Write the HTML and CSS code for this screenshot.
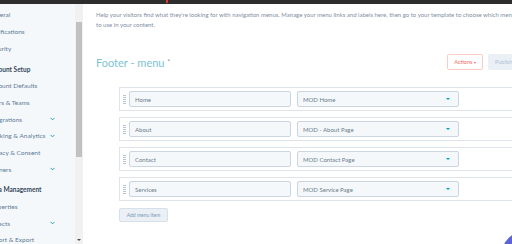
FILE: index.html
```html
<!DOCTYPE html>
<html lang="en">

<head>
    <meta charset="UTF-8">
    <meta name="viewport" content="width=device-width, initial-scale=1.0">
    <title>Navigation menus</title>
    <link rel="stylesheet" href="styles.css">
</head>

<body>
<div class="topbar"><span class="topbar-mark"></span></div>
<div class="layout">
    <aside class="sidebar">
        <ul class="nav">
            <li class="nav-item">General</li>
            <li class="nav-item">Notifications</li>
            <li class="nav-item">Security</li>
            <li class="nav-item nav-head">Account Setup</li>
            <li class="nav-item">Account Defaults</li>
            <li class="nav-item">Users &amp; Teams</li>
            <li class="nav-item">Integrations <svg class="chev" viewBox="0 0 6 4"><path d="M0.6 0.6 L3 3 L5.4 0.6" /></svg></li>
            <li class="nav-item">Tracking &amp; Analytics <svg class="chev" viewBox="0 0 6 4"><path d="M0.6 0.6 L3 3 L5.4 0.6" /></svg></li>
            <li class="nav-item">Privacy &amp; Consent</li>
            <li class="nav-item">Banners <svg class="chev" viewBox="0 0 6 4"><path d="M0.6 0.6 L3 3 L5.4 0.6" /></svg></li>
            <li class="nav-item nav-head">Data Management</li>
            <li class="nav-item">Properties</li>
            <li class="nav-item">Objects <svg class="chev" viewBox="0 0 6 4"><path d="M0.6 0.6 L3 3 L5.4 0.6" /></svg></li>
            <li class="nav-item">Import &amp; Export</li>
        </ul>
    </aside>
    <div class="scrollbar">
        <div class="scrollbar-thumb"></div>
        <span class="scrollbar-arrow"></span>
    </div>
    <main class="main">
        <div class="content">
            <h1 class="page-title">Navigation menus</h1>
            <p class="intro">Help your visitors find what they're looking for with navigation menus. Manage your menu links and labels here, then go to your template to choose which menu<br>to use in your content.</p>

            <div class="menu-header">
                <h2 class="menu-title">Footer - menu <span class="req">*</span></h2>
                <div class="menu-actions">
                    <button class="btn btn-actions">Actions <span class="caret">&#9662;</span></button>
                    <button class="btn btn-publish">Publish</button>
                </div>
            </div>

            <div class="menu-items">
                <div class="menu-row">
                    <svg class="grip" viewBox="0 0 3 9"><rect x="0" y="0" width="3" height="1" /><rect x="0" y="2" width="3" height="1" /><rect x="0" y="4" width="3" height="1" /><rect x="0" y="6" width="3" height="1" /><rect x="0" y="8" width="3" height="1" /></svg>
                    <div class="field">Home</div>
                    <div class="field select">MOD Home <span class="arrow"></span></div>
                </div>
                <div class="menu-row">
                    <svg class="grip" viewBox="0 0 3 9"><rect x="0" y="0" width="3" height="1" /><rect x="0" y="2" width="3" height="1" /><rect x="0" y="4" width="3" height="1" /><rect x="0" y="6" width="3" height="1" /><rect x="0" y="8" width="3" height="1" /></svg>
                    <div class="field">About</div>
                    <div class="field select">MOD - About Page <span class="arrow"></span></div>
                </div>
                <div class="menu-row">
                    <svg class="grip" viewBox="0 0 3 9"><rect x="0" y="0" width="3" height="1" /><rect x="0" y="2" width="3" height="1" /><rect x="0" y="4" width="3" height="1" /><rect x="0" y="6" width="3" height="1" /><rect x="0" y="8" width="3" height="1" /></svg>
                    <div class="field">Contact</div>
                    <div class="field select">MOD Contact Page <span class="arrow"></span></div>
                </div>
                <div class="menu-row">
                    <svg class="grip" viewBox="0 0 3 9"><rect x="0" y="0" width="3" height="1" /><rect x="0" y="2" width="3" height="1" /><rect x="0" y="4" width="3" height="1" /><rect x="0" y="6" width="3" height="1" /><rect x="0" y="8" width="3" height="1" /></svg>
                    <div class="field">Services</div>
                    <div class="field select">MOD Service Page <span class="arrow"></span></div>
                </div>
            </div>

            <button class="btn btn-add">Add menu item</button>
        </div>
    </main>
</div>
<div class="chat-launcher"></div>
</body>

</html>
```

FILE: styles.css
```css
body,
html {
    width: 100%;
    height: 100%;
    padding: 0;
    margin: 0;
    overflow: hidden;
}

body {
    font-family: Lato, "Open Sans", sans-serif;
    background-color: #ffffff;
    color: #33475b;
}

.topbar {
    height: 4px;
    background-color: #2d2d2d;
    display: flex;
}

.topbar-mark {
    width: 2px;
    height: 3px;
    margin-left: 166px;
    background-color: #e0362c;
}

.layout {
    display: flex;
    height: 240px;
}

/* left settings nav */

.sidebar {
    width: 75px;
    flex-shrink: 0;
    background-color: #f5f8fa;
    overflow: hidden;
}

.nav {
    list-style: none;
    margin: 0 0 0 -12px;
    padding: 2.65px 20px 0 0;
}

.nav-item {
    height: 16.7px;
    display: flex;
    align-items: center;
    justify-content: space-between;
    font-size: 6.5px;
    color: #5f7b98;
    white-space: nowrap;
}

.nav-head {
    margin-top: 4px;
    font-weight: bold;
    color: #33475b;
}

.chev {
    width: 5px;
    height: 4px;
    fill: none;
    stroke: #0091ae;
    stroke-width: 1;
}

.scrollbar {
    width: 8px;
    flex-shrink: 0;
    background-color: #f1f1f1;
    display: flex;
    flex-direction: column;
    align-items: center;
}

.scrollbar-thumb {
    width: 6px;
    height: 135px;
    margin-top: 18px;
    background-color: #c1c1c1;
}

.scrollbar-arrow {
    margin-top: auto;
    margin-bottom: 3px;
    border-left: 2px solid transparent;
    border-right: 2px solid transparent;
    border-top: 2px solid #505050;
}

/* main panel */

.main {
    flex: 1;
    overflow: hidden;
}

.content {
    width: 432px;
    padding-left: 13px;
}

.page-title {
    margin: -13px 0 0;
    font-size: 12px;
    line-height: 14px;
    font-weight: normal;
    color: #33475b;
}

.intro {
    margin: 5px 0 0;
    font-size: 6px;
    line-height: 10px;
    color: #7f8f9f;
    white-space: nowrap;
}

.menu-header {
    margin-top: 24px;
    height: 16px;
    display: flex;
    align-items: center;
    justify-content: space-between;
}

.menu-title {
    margin: 0;
    font-size: 11px;
    font-weight: normal;
    color: #7cc3d6;
}

.req {
    font-size: 7px;
    color: #8a9bab;
    vertical-align: 2px;
}

.menu-actions {
    display: flex;
    gap: 5px;
}

.btn {
    font-family: Lato, "Open Sans", sans-serif;
    border-radius: 2px;
    cursor: pointer;
    padding: 0;
}

.btn-actions {
    width: 36px;
    height: 16px;
    font-size: 5.5px;
    color: #f36b63;
    background-color: #ffffff;
    border: 1px solid #fbcdc8;
}

.caret {
    font-size: 4px;
}

.btn-publish {
    width: 40px;
    height: 16px;
    font-size: 5.5px;
    color: #b0c1d4;
    background-color: #eaf0f6;
    border: 1px solid #eaf0f6;
    text-align: left;
    padding-left: 6px;
}

.menu-items {
    margin: 17px 0 0 23px;
    display: flex;
    flex-direction: column;
    gap: 6px;
}

.menu-row {
    width: 430px;
    height: 24px;
    box-sizing: border-box;
    border: 1px solid #dfe3eb;
    background-color: #ffffff;
    display: flex;
    align-items: center;
    padding-left: 3px;
}

.grip {
    width: 3px;
    height: 9px;
    margin-right: 3px;
    fill: #b5c3d2;
}

.field {
    width: 162px;
    height: 16px;
    flex-shrink: 0;
    box-sizing: border-box;
    border: 1px solid #cbd6e2;
    border-radius: 2px;
    background-color: #f5f8fa;
    font-size: 6px;
    color: #6a7b8c;
    display: flex;
    align-items: center;
    padding-left: 5px;
}

.select {
    margin-left: 6px;
    justify-content: space-between;
    padding-right: 8px;
}

.arrow {
    border-left: 2px solid transparent;
    border-right: 2px solid transparent;
    border-top: 2px solid #00a4bd;
}

.btn-add {
    margin: 6px 0 0 23px;
    width: 49px;
    height: 14px;
    font-size: 5px;
    color: #7c98b6;
    background-color: #eaf0f6;
    border: 1px solid #d6e0eb;
}

.chat-launcher {
    position: fixed;
    left: 500px;
    top: 229px;
    width: 60px;
    height: 60px;
    border-radius: 50%;
    background-color: #5d63d5;
}
```
